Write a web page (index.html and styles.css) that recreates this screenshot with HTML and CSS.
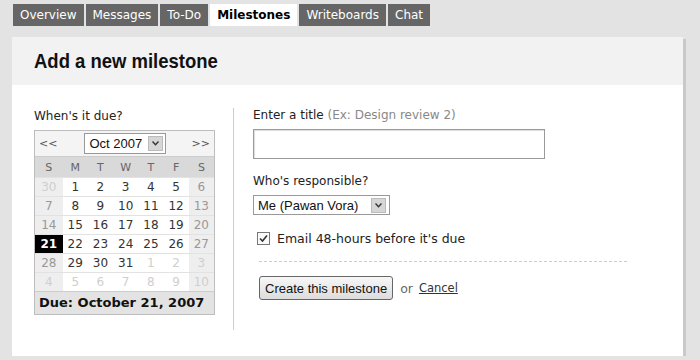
FILE: index.html
```html
<!DOCTYPE html>
<html lang="en">
<head>
    <meta charset="UTF-8">
    <title>Add a new milestone</title>
    <link rel="stylesheet" href="styles.css">
</head>
<body>

    <ul class="tabs">
        <li><a href="#">Overview</a></li>
        <li><a href="#">Messages</a></li>
        <li><a href="#">To-Do</a></li>
        <li class="current"><a href="#">Milestones</a></li>
        <li><a href="#">Writeboards</a></li>
        <li><a href="#">Chat</a></li>
    </ul>

    <div class="panel">
        <div class="panel-head">
            <h1>Add a new milestone</h1>
        </div>
        <div class="panel-body">
            <div class="due-col">
                <div class="label">When's it due?</div>
                <div class="calendar">
                    <div class="cal-nav">
                        <a href="#">&lt;&lt;</a>
                        <div class="fake-select month-select">
                            <span>Oct 2007</span>
                            <span class="arrow"><svg width="7" height="5" viewBox="0 0 7 5"><path d="M0.5 0.5 L3.5 3.8 L6.5 0.5" fill="none" stroke="#333" stroke-width="1.4"/></svg></span>
                        </div>
                        <a href="#">&gt;&gt;</a>
                    </div>
                    <table>
                        <tr class="days">
                            <th>S</th><th>M</th><th>T</th><th>W</th><th>T</th><th>F</th><th>S</th>
                        </tr>
                        <tr>
                            <td class="we other">30</td><td>1</td><td>2</td><td>3</td><td>4</td><td>5</td><td class="we">6</td>
                        </tr>
                        <tr>
                            <td class="we">7</td><td>8</td><td>9</td><td>10</td><td>11</td><td>12</td><td class="we">13</td>
                        </tr>
                        <tr>
                            <td class="we">14</td><td>15</td><td>16</td><td>17</td><td>18</td><td>19</td><td class="we">20</td>
                        </tr>
                        <tr>
                            <td class="selected">21</td><td>22</td><td>23</td><td>24</td><td>25</td><td>26</td><td class="we">27</td>
                        </tr>
                        <tr>
                            <td class="we">28</td><td>29</td><td>30</td><td>31</td><td class="other">1</td><td class="other">2</td><td class="we other">3</td>
                        </tr>
                        <tr>
                            <td class="we other">4</td><td class="other">5</td><td class="other">6</td><td class="other">7</td><td class="other">8</td><td class="other">9</td><td class="we other">10</td>
                        </tr>
                    </table>
                    <div class="cal-due">Due: October 21, 2007</div>
                </div>
            </div>

            <div class="form-col">
                <div class="label">Enter a title <span class="hint">(Ex: Design review 2)</span></div>
                <input type="text" class="title-input" autofocus>

                <div class="label">Who's responsible?</div>
                <div class="fake-select person-select">
                    <span>Me (Pawan Vora)</span>
                    <span class="arrow"><svg width="7" height="5" viewBox="0 0 7 5"><path d="M0.5 0.5 L3.5 3.8 L6.5 0.5" fill="none" stroke="#333" stroke-width="1.4"/></svg></span>
                </div>

                <div class="check-row">
                    <span class="checkbox"><svg width="9" height="9" viewBox="0 0 9 9"><path d="M1 4.5 L3.5 7 L8 1.5" fill="none" stroke="#333" stroke-width="1.6"/></svg></span>
                    Email 48-hours before it's due
                </div>

                <div class="actions">
                    <button>Create this milestone</button>
                    <span class="or">or</span>
                    <a href="#" class="cancel">Cancel</a>
                </div>
            </div>
        </div>
    </div>

</body>
</html>
```

FILE: styles.css
```css
body {
    margin: 0;
    padding: 4px 0 0 12px;
    background: #e3e3e3;
    font-family: "DejaVu Sans", Verdana, sans-serif;
    font-size: 12px;
    color: #222;
}
.tabs {
    list-style: none;
    margin: 0 0 0 1px;
    padding: 0;
    display: flex;
    gap: 2px;
}
.tabs a {
    display: block;
    height: 22px;
    line-height: 22px;
    padding: 0 7px;
    background: #666;
    color: #fff;
    text-decoration: none;
    font-size: 12px;
}
.tabs .current a {
    background: #fff;
    color: #000;
    font-weight: bold;
}
.panel {
    margin-top: 11px;
    width: 671px;
    background: #fff;
    box-shadow: 3px 2px 0 #c9c9c9;
}
.panel-head {
    height: 48px;
    background: #f2f2f2;
    padding: 0 22px;
    display: flex;
    align-items: center;
}
.panel-head h1 {
    margin: 0;
    font-family: "Liberation Sans", Arial, sans-serif;
    font-size: 21px;
    font-weight: bold;
    color: #111;
    transform: scaleX(0.88);
    transform-origin: left center;
}
.panel-body {
    display: flex;
    padding: 23px 0 26px 22px;
}
.label {
    margin-bottom: 7px;
    color: #222;
}
.hint {
    color: #888;
}
.due-col {
    width: 199px;
    padding: 1px 0 15px 0;
}
.calendar {
    width: 179px;
    border: 1px solid #bdbdbd;
    background: #fff;
}
.cal-nav {
    height: 25px;
    display: flex;
    align-items: center;
    justify-content: space-between;
    padding: 0 4px;
    background: #f4f4f4;
}
.cal-nav a {
    color: #555;
    text-decoration: none;
    font-size: 11px;
}
.fake-select {
    display: flex;
    align-items: center;
    justify-content: space-between;
    border: 1px solid #999;
    background: #fff;
    font-family: "Liberation Sans", Arial, sans-serif;
    font-size: 13px;
    color: #111;
    box-sizing: border-box;
}
.month-select {
    width: 82px;
    height: 21px;
    padding: 0 2px 0 5px;
}
.arrow {
    width: 13px;
    height: 13px;
    background: #d6d6d6;
    border: 1px solid #bbb;
    display: flex;
    align-items: center;
    justify-content: center;
}
.calendar table {
    width: 100%;
    border-collapse: collapse;
}
.calendar th {
    height: 20px;
    padding: 0;
    background: #d9d9d9;
    color: #666;
    font-weight: normal;
    font-size: 11px;
    border-top: 1px solid #ccc;
}
.calendar td {
    height: 18px;
    line-height: 18px;
    text-align: center;
    border-top: 1px solid #e2e2e2;
    color: #333;
    padding: 0;
}
.calendar td.we {
    background: #eeeeee;
    color: #999;
}
.calendar td.other {
    color: #cfcfcf;
}
.calendar td.selected {
    background: #000;
    color: #fff;
    font-weight: bold;
}
.cal-due {
    height: 22px;
    line-height: 22px;
    padding: 0 4px;
    background: #e3e3e3;
    border-top: 1px solid #ccc;
    font-weight: bold;
    font-size: 13px;
    color: #111;
}
.form-col {
    border-left: 1px solid #ccc;
    padding: 0 0 0 19px;
    width: 374px;
}
.title-input {
    display: block;
    width: 292px;
    height: 30px;
    box-sizing: border-box;
    margin: 0 0 15px 0;
    border: 1px solid #9a9a9a;
    box-shadow: inset 1px 1px 1px #ddd;
    outline: none;
    font-size: 14px;
}
.person-select {
    width: 137px;
    height: 20px;
    padding: 0 3px 0 4px;
}
.check-row {
    display: flex;
    align-items: center;
    gap: 7px;
    margin: 16px 0 0 4px;
    font-size: 12.5px;
}
.checkbox {
    width: 11px;
    height: 11px;
    border: 1px solid #777;
    display: flex;
    align-items: center;
    justify-content: center;
    background: #fafafa;
}
.actions {
    margin: 15px 0 0 6px;
    padding-top: 14px;
    border-top: 1px dashed #ccc;
    width: 368px;
    display: flex;
    align-items: center;
}
button {
    height: 24px;
    padding: 0 5px;
    border: 1px solid #666;
    border-radius: 3px;
    background: linear-gradient(#f7f7f7, #dcdcdc);
    font-family: "Liberation Sans", Arial, sans-serif;
    font-size: 13px;
    color: #111;
}
.or {
    margin: 0 6px 0 7px;
    color: #666;
    font-size: 12.5px;
}
.cancel {
    color: #333;
    font-size: 11.5px;
}
```
